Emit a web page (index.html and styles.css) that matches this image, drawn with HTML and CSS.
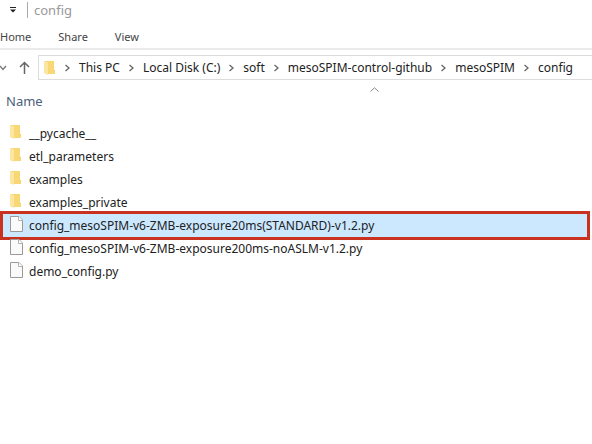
FILE: index.html
```html
<!DOCTYPE html>
<html lang="en">
<head>
    <meta charset="UTF-8">
    <meta name="viewport" content="width=device-width, initial-scale=1.0">
    <title>config</title>
    <link rel="stylesheet" href="styles.css">
</head>
<body>
    <!-- Shared icons -->
    <svg class="icon-defs" aria-hidden="true">
        <symbol id="icon-folder" viewBox="0 0 12 16">
            <path d="M1 1H9V14H1Z" fill="#f3ce6c"/>
            <path d="M8 10H11V14H8Z" fill="#f3c95c"/>
            <path d="M0 1L4 2V15L0 13Z" fill="#fde6a2"/>
            <path d="M4 1H10V11H11V14H4Z" fill="#f8d775"/>
        </symbol>
        <symbol id="icon-file" viewBox="0 0 13 16">
            <path d="M.5 .5H9L12.500 4V15.500H.5Z" fill="#fafafa" stroke="#9a9a9a"/>
            <path d="M8.500 .5V4.500H12.500" fill="#fff" stroke="#b0b0b0"/>
        </symbol>
        <symbol id="icon-chevron" viewBox="0 0 5 8">
            <path d="M.5 1L4 4L.5 7" fill="none" stroke="#666" stroke-width="1.300"/>
        </symbol>
    </svg>

    <header class="title-bar">
        <button class="quick-access" type="button" aria-label="Customize Quick Access Toolbar">
            <svg width="6" height="6" viewBox="0 0 6 6"><path d="M0 0H6V1H0ZM0 2.500H6L3 5.500Z" fill="#222"/></svg>
        </button>
        <span class="window-title">config</span>
    </header>

    <nav class="ribbon">
        <button type="button">Home</button>
        <button type="button">Share</button>
        <button type="button">View</button>
    </nav>

    <div class="navigation">
        <button class="recent" type="button" aria-label="Recent locations">
            <svg width="8" height="6" viewBox="0 0 8 6"><path d="M0 1L3 4.500L6 1" fill="none" stroke="#777" stroke-width="1.300"/></svg>
        </button>
        <button class="up" type="button" aria-label="Up">
            <svg width="11" height="14" viewBox="0 0 11 14"><path d="M5.500 13V1.500M1 6L5.500 1.500L10 6" fill="none" stroke="#666" stroke-width="1.500"/></svg>
        </button>
        <div class="address-bar">
            <svg class="folder"><use href="#icon-folder"/></svg>
            <svg class="chevron"><use href="#icon-chevron"/></svg>
            <a href="#">This PC</a>
            <svg class="chevron"><use href="#icon-chevron"/></svg>
            <a href="#">Local Disk (C:)</a>
            <svg class="chevron"><use href="#icon-chevron"/></svg>
            <a href="#">soft</a>
            <svg class="chevron"><use href="#icon-chevron"/></svg>
            <a href="#">mesoSPIM-control-github</a>
            <svg class="chevron"><use href="#icon-chevron"/></svg>
            <a href="#">mesoSPIM</a>
            <svg class="chevron"><use href="#icon-chevron"/></svg>
            <a href="#">config</a>
        </div>
    </div>

    <main class="files">
        <button class="column-header" type="button">
            <span>Name</span>
            <svg class="sort" width="9" height="5" viewBox="0 0 9 5"><path d="M.5 4.500L4.500 .8L8.500 4.500" fill="none" stroke="#888"/></svg>
        </button>
        <ul class="file-list">
            <li><svg class="folder"><use href="#icon-folder"/></svg><span>__pycache__</span></li>
            <li><svg class="folder"><use href="#icon-folder"/></svg><span>etl_parameters</span></li>
            <li><svg class="folder"><use href="#icon-folder"/></svg><span>examples</span></li>
            <li><svg class="folder"><use href="#icon-folder"/></svg><span>examples_private</span></li>
            <li class="selected"><svg class="file"><use href="#icon-file"/></svg><span>config_mesoSPIM-v6-ZMB-exposure20ms(STANDARD)-v1.2.py</span></li>
            <li><svg class="file"><use href="#icon-file"/></svg><span>config_mesoSPIM-v6-ZMB-exposure200ms-noASLM-v1.2.py</span></li>
            <li><svg class="file"><use href="#icon-file"/></svg><span>demo_config.py</span></li>
        </ul>
    </main>
</body>
</html>
```
FILE: styles.css
```css
* {
    box-sizing: border-box;
}

body {
    margin: 0;
    background-color: #ffffff;
    color: #222222;
    font-family: "Segoe UI", "Noto Sans", sans-serif;
    font-size: 12px;
    line-height: 20px;
    overflow-x: hidden;
}

button {
    padding: 0;
    border: none;
    background: none;
    color: inherit;
    font: inherit;
}

svg {
    display: block;
    flex: none;
}

.icon-defs {
    position: absolute;
    width: 0;
    height: 0;
}

.folder {
    width: 12px;
    height: 16px;
}

.file {
    width: 13px;
    height: 16px;
}

.chevron {
    width: 5px;
    height: 8px;
}

.title-bar {
    display: flex;
    align-items: center;
    gap: 11px;
    height: 19px;
    padding-left: 10px;
}

.window-title {
    padding-left: 6px;
    border-left: 1px solid #aaaaaa;
    color: #999999;
    line-height: 16px;
}

.ribbon {
    display: flex;
    gap: 27px;
    height: 31px;
    padding-top: 7px;
    border-bottom: 2px solid #ebebeb;
    color: #444444;
    font-size: 11px;
}

.navigation {
    display: flex;
    align-items: center;
    padding-top: 5px;
}

.recent {
    width: 19px;
}

.up {
    width: 19px;
}

.address-bar {
    display: flex;
    flex: 1;
    align-items: center;
    gap: 9px;
    height: 25px;
    padding-left: 5px;
    border: 1px solid #dcdcdc;
    border-right: none;
    white-space: nowrap;
}

.address-bar a {
    color: inherit;
    text-decoration: none;
}

.column-header {
    display: flex;
    position: relative;
    align-items: center;
    width: 100%;
    height: 42px;
    padding-left: 6px;
    color: #4c607a;
}

.sort {
    position: absolute;
    top: 7px;
    left: 370px;
}

.file-list {
    margin: 0;
    padding: 0;
    list-style: none;
}

.file-list li {
    display: flex;
    align-items: center;
    height: 23px;
    padding-left: 10px;
    white-space: nowrap;
}

.file-list svg {
    margin-bottom: 3px;
}

.file-list .folder {
    margin-right: 7px;
}

.file-list .file {
    margin-right: 6px;
}

.file-list .selected {
    height: 29px;
    margin: -3px 2px -3px 0;
    padding-left: 7px;
    border: 3px solid #c8321f;
    background-color: #cce8ff;
}

.window-title,
.column-header {
    font-size: 13px;
}
```
